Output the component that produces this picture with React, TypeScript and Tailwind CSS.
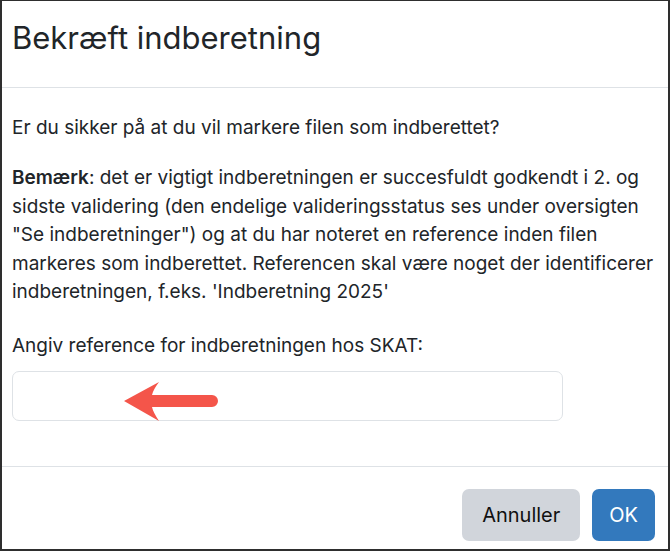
import React from 'react';

const ArrowMark = () => (
  <svg
    className="absolute left-[110px] top-[8px] pointer-events-none"
    width="100"
    height="44"
    viewBox="0 0 100 44"
  >
    <path
      d="M2 22 L37 3 Q31 11 30 16 L90 16 A6 6 0 0 1 90 28 L30 28 Q31 33 37 42 Z"
      fill="#f4554a"
    />
  </svg>
);

const App = () => {
  return (
    <div className="w-[670px] h-[551px] bg-[#2e2e2e] pt-px pl-[2px] pr-[2px] pb-[2px] font-['Inter','Liberation_Sans',Arial,sans-serif] text-[#212529]">
      <div className="h-full bg-white flex flex-col">
        {/* Header */}
        <div className="h-[87px] shrink-0 border-b border-[#dee2e6] px-[10px] pt-[18px]">
          <h1 className="text-[31px] leading-[37px]">Bekræft indberetning</h1>
        </div>

        {/* Body */}
        <div className="px-[10px] pt-[26px] pb-[45px] text-[19px] leading-[28.5px]">
          <p>Er du sikker på at du vil markere filen som indberettet?</p>
          <p className="mt-[21.5px]">
            <strong className="font-semibold">Bemærk</strong>: det er vigtigt indberetningen er succesfuldt godkendt i 2. og
            sidste validering (den endelige valideringsstatus ses under oversigten "Se indberetninger") og at du har
            noteret en reference inden filen markeres som indberettet. Referencen skal være noget der identificerer
            indberetningen, f.eks. 'Indberetning 2025'
          </p>
          <label className="block mt-[25px]">Angiv reference for indberetningen hos SKAT:</label>
          <div className="relative mt-[11px] w-[551px]">
            <input
              type="text"
              className="w-full h-[50px] rounded-[7px] border border-[#dee2e6] px-3 outline-none"
            />
            <ArrowMark />
          </div>
        </div>

        {/* Footer */}
        <div className="flex-1 border-t border-[#dee2e6] flex justify-end items-start gap-[12px] pt-[22px] pr-[13px]">
          <button className="h-[52px] px-[20px] rounded-[7px] bg-[#d1d5db] text-[20px] text-[#111]">Annuller</button>
          <button className="h-[52px] px-[17px] rounded-[7px] bg-[#3379bd] text-[20px] text-white">OK</button>
        </div>
      </div>
    </div>
  );
};

export default App;
